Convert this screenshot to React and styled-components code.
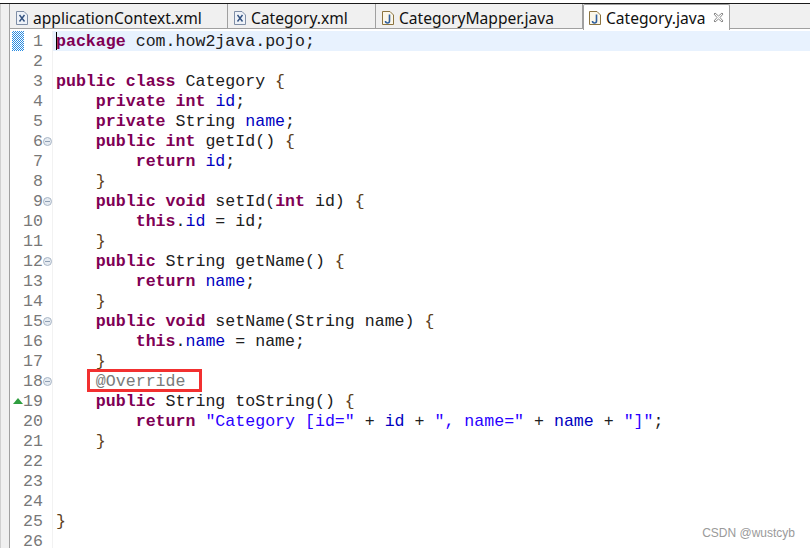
import React from 'react';
import styled, { createGlobalStyle } from 'styled-components';

const Global = createGlobalStyle`
  html, body { margin: 0; padding: 0; background: #fff; }
  body { width: 810px; height: 548px; overflow: hidden; }
`;

const Page = styled.div`
  position: relative;
  width: 810px;
  height: 548px;
  overflow: hidden;
  background: #fff;
  display: flex;
  flex-direction: column;
`;

const TopLine = styled.div`
  height: 4px;
  flex: none;
  box-sizing: border-box;
  background: #fff;
  border-bottom: 1px solid #1a1a1a;
`;

const Body = styled.div`
  flex: 1;
  display: flex;
  min-height: 0;
`;

const Side = styled.div`
  width: 10px;
  flex: none;
  box-sizing: border-box;
  background: #f0f0f0;
  border-left: 1px solid #d0d0d0;
  border-right: 1px solid #a0a0a0;
`;

const Main = styled.div`
  flex: 1;
  display: flex;
  flex-direction: column;
  min-width: 0;
`;

const TabBar = styled.div`
  height: 25px;
  flex: none;
  display: flex;
  background: #f0f0f0;
  border-bottom: 1px solid #a0a0a0;
  box-sizing: border-box;
`;

const Tab = styled.div`
  position: relative;
  width: ${p => p.$w}px;
  display: flex;
  align-items: center;
  box-sizing: border-box;
  padding: 4px 0 0 ${p => p.$pad}px;
  gap: 5px;
  font: 15.6px "Noto Sans", "Liberation Sans", sans-serif;
  color: #111;
  white-space: nowrap;
  border-right: 1px solid #a0a0a0;
  ${p => p.$active && `
    background: #fff;
    height: 26px;
    padding-top: 1px;
    padding-bottom: 1px;
    border-left: 1px solid #a0a0a0;
    border-top: 1px solid #a0a0a0;
    border-radius: 2px 2px 0 0;
  `}
`;

const Close = styled.svg`
  width: 11px;
  height: 11px;
  margin-left: 3px;
  flex: none;
`;

const Editor = styled.div`
  flex: 1;
  display: flex;
  padding-top: 2px;
`;

const Ruler = styled.div`
  width: 43px;
  flex: none;
  box-sizing: border-box;
  border-right: 1px solid #f2f2f2;
`;

const RulerRow = styled.div`
  position: relative;
  height: 20px;
  box-sizing: border-box;
  font: 16.6px/22px "Liberation Mono", monospace;
  color: #787878;
  text-align: right;
  padding-right: 9px;
`;

const Mark = styled.div`
  position: absolute;
  left: 2px;
  top: 0;
  width: 12px;
  height: 20px;
  background: repeating-conic-gradient(#2a8be0 0 25%, #fff 0 50%) 0 0 / 2px 2px;
`;

const Fold = styled.span`
  position: absolute;
  right: 0;
  top: 6px;
  width: 9px;
  height: 9px;
  box-sizing: border-box;
  border-radius: 50%;
  border: 1px solid #a9b6c6;
  background: linear-gradient(#8fa0b5, #8fa0b5) center / 5px 1px no-repeat, #e6ebf1;
`;

const Arrow = styled.span`
  position: absolute;
  left: 3px;
  top: 7px;
  width: 0;
  height: 0;
  border-left: 5px solid transparent;
  border-right: 5px solid transparent;
  border-bottom: 6px solid #2f9e3f;
`;

const Code = styled.div`
  flex: 1;
  min-width: 0;
`;

const Line = styled.div`
  position: relative;
  height: 20px;
  padding-left: 3px;
  font: 16.6px/22px "Liberation Mono", monospace;
  color: #202020;
  white-space: pre;
  background: ${p => (p.$current ? '#e8f2fe' : 'transparent')};
`;

const Kw = styled.span`
  color: #7f0055;
  font-weight: bold;
`;

const Fld = styled.span`
  color: #0000c0;
`;

const Str = styled.span`
  color: #2a00ff;
`;

const Ann = styled.span`
  color: #7a7a7a;
`;

const Brace = styled.span`
  color: #5c4020;
`;

const Caret = styled.span`
  position: absolute;
  left: 3px;
  top: 1px;
  width: 1px;
  height: 18px;
  background: #000;
`;

const Highlight = styled.div`
  position: absolute;
  left: 87px;
  top: 369px;
  width: 115px;
  height: 23px;
  box-sizing: border-box;
  border: 3px solid #f23030;
`;

const Watermark = styled.div`
  position: absolute;
  right: 15px;
  bottom: 8px;
  font: 12px "Liberation Sans", sans-serif;
  color: #9a9a9a;
`;

const FileIcon = ({ java }) => (
  <svg width="12" height="14" viewBox="0 0 12 14" style={{ flex: 'none' }}>
    <path d="M.5.5h7.500l3.500 3.500v9.500h-11z" fill={java ? '#fbf7ea' : '#eef2f8'} stroke={java ? '#8c7440' : '#7f8ea6'} />
    {java
      ? <path d="M7.500 3.500v6.500a2 2 0 0 1-4 0" fill="none" stroke="#2f5f9e" strokeWidth="1.6" />
      : <path d="M3.500 4l5 6.500M8.500 4l-5 6.500" fill="none" stroke="#32517f" strokeWidth="1.4" />}
  </svg>
);

const lines = [
  <><Caret /><Kw>package</Kw> com.how2java.pojo;</>,
  '',
  <><Kw>public</Kw> <Kw>class</Kw> Category <Brace>{'{'}</Brace></>,
  <>    <Kw>private</Kw> <Kw>int</Kw> <Fld>id</Fld>;</>,
  <>    <Kw>private</Kw> String <Fld>name</Fld>;</>,
  <>    <Kw>public</Kw> <Kw>int</Kw> getId() <Brace>{'{'}</Brace></>,
  <>        <Kw>return</Kw> <Fld>id</Fld>;</>,
  <>    <Brace>{'}'}</Brace></>,
  <>    <Kw>public</Kw> <Kw>void</Kw> setId(<Kw>int</Kw> id) <Brace>{'{'}</Brace></>,
  <>        <Kw>this</Kw>.<Fld>id</Fld> = id;</>,
  <>    <Brace>{'}'}</Brace></>,
  <>    <Kw>public</Kw> String getName() <Brace>{'{'}</Brace></>,
  <>        <Kw>return</Kw> <Fld>name</Fld>;</>,
  <>    <Brace>{'}'}</Brace></>,
  <>    <Kw>public</Kw> <Kw>void</Kw> setName(String name) <Brace>{'{'}</Brace></>,
  <>        <Kw>this</Kw>.<Fld>name</Fld> = name;</>,
  <>    <Brace>{'}'}</Brace></>,
  <>    <Ann>@Override</Ann></>,
  <>    <Kw>public</Kw> String toString() <Brace>{'{'}</Brace></>,
  <>        <Kw>return</Kw> <Str>"Category [id="</Str> + <Fld>id</Fld> + <Str>", name="</Str> + <Fld>name</Fld> + <Str>"]"</Str>;</>,
  <>    <Brace>{'}'}</Brace></>,
  '',
  '',
  '',
  <Brace>{'}'}</Brace>,
  '',
];

const foldLines = [6, 9, 12, 15, 18];

const tabs = [
  { name: 'applicationContext.xml', w: 218, pad: 6 },
  { name: 'Category.xml', w: 148, pad: 6 },
  { name: 'CategoryMapper.java', w: 207, pad: 6, java: true },
  { name: 'Category.java', w: 147, pad: 5, java: true, active: true },
];

export default function App() {
  return (
    <Page>
      <Global />
      <TopLine />
      <Body>
        <Side />
        <Main>
          <TabBar>
            {tabs.map(t => (
              <Tab key={t.name} $w={t.w} $pad={t.pad} $active={t.active}>
                <FileIcon java={t.java} />
                {t.name}
                {t.active && (
                  <Close viewBox="0 0 11 11">
                    <path d="M1 2l1-1 3.500 3 3.500-3 1 1-3 3.500 3 3.500-1 1-3.500-3-3.500 3-1-1 3-3.500z" fill="#fff" stroke="#8a8a8a" />
                  </Close>
                )}
              </Tab>
            ))}
          </TabBar>
          <Editor>
            <Ruler>
              {lines.map((_, i) => (
                <RulerRow key={i}>
                  {i === 0 && <Mark />}
                  {i === 18 && <Arrow />}
                  {i + 1}
                  {foldLines.includes(i + 1) && <Fold />}
                </RulerRow>
              ))}
            </Ruler>
            <Code>
              {lines.map((l, i) => (
                <Line key={i} $current={i === 0}>{l}</Line>
              ))}
            </Code>
          </Editor>
        </Main>
      </Body>
      <Highlight />
      <Watermark>CSDN @wustcyb</Watermark>
    </Page>
  );
}
